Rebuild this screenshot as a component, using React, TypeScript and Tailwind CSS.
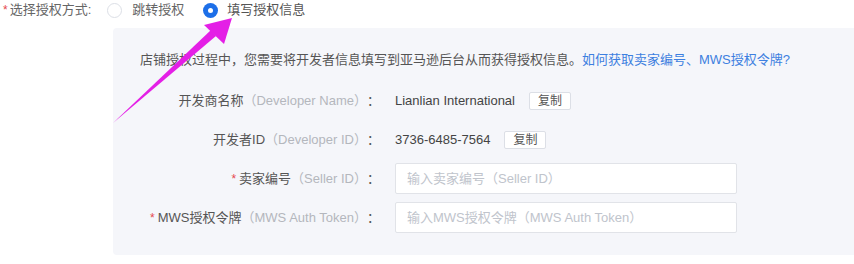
import React from 'react';

const font = { fontFamily: '"Liberation Sans", "Noto Sans CJK SC", Arial, sans-serif' };

const Label: React.FC<{ name: string; en: string; required?: boolean }> = ({ name, en, required }) => (
  <div className="flex items-center justify-end whitespace-nowrap text-[13px]">
    {required && <span className="text-[#e5484d] mr-[3px] text-[12px]">*</span>}
    <span className="text-[#555]">{name}</span>
    <span className="text-[#b4b7bd]">（{en}）</span>
    <span className="text-[#555]">：</span>
  </div>
);

const CopyButton: React.FC = () => (
  <button className="ml-[14px] h-[18px] w-[42px] bg-white border border-[#dcdfe6] rounded-[2px] text-[12px] leading-none text-[#555]">
    复制
  </button>
);

const Arrow: React.FC = () => (
  <svg className="absolute left-0 top-0 pointer-events-none" width="260" height="140" viewBox="0 0 260 140">
    <polygon points="113,123 211,30 216,36" fill="#e41fe6" />
    <polygon points="232,18 204,25 224,44" fill="#e41fe6" />
  </svg>
);

export default function App() {
  return (
    <div className="relative w-[854px] h-[264px] bg-white overflow-hidden" style={font}>
      <div className="flex items-center h-[20px] text-[13px]">
        <span className="ml-[3px] text-[#e5484d] text-[12px]">*</span>
        <span className="ml-[2px] text-[#666]">选择授权方式:</span>
        <label className="flex items-center ml-[16px]">
          <span className="w-[15px] h-[15px] rounded-full border border-[#dcdfe6] bg-white" />
          <span className="ml-[10px] text-[#666]">跳转授权</span>
        </label>
        <label className="flex items-center ml-[19px]">
          <span className="w-[15px] h-[15px] rounded-full bg-[#1d6fe8] flex items-center justify-center">
            <span className="w-[5px] h-[5px] rounded-full bg-white" />
          </span>
          <span className="ml-[9px] text-[#555]">填写授权信息</span>
        </label>
      </div>

      <div className="ml-[113px] mt-[8px] w-[741px] h-[227px] bg-[#f5f6fa] rounded-l-[4px] pt-[22px]">
        <p className="pl-[27px] h-[20px] leading-[20px] text-[13px] text-[#555] whitespace-nowrap">
          店铺授权过程中，您需要将开发者信息填写到亚马逊后台从而获得授权信息。
          <a className="text-[#3d7fe0]">如何获取卖家编号、MWS授权令牌?</a>
        </p>

        <div className="mt-[11px] grid grid-cols-[267px_1fr] gap-x-[15px]">
          <div className="h-[39px] flex items-center justify-end">
            <Label name="开发商名称" en="Developer Name" />
          </div>
          <div className="h-[39px] flex items-center text-[13px] text-[#444]">
            Lianlian International
            <CopyButton />
          </div>

          <div className="h-[39px] flex items-center justify-end">
            <Label name="开发者ID" en="Developer ID" />
          </div>
          <div className="h-[39px] flex items-center text-[13px] text-[#444]">
            3736-6485-7564
            <CopyButton />
          </div>

          <div className="h-[39px] flex items-center justify-end">
            <Label name="卖家编号" en="Seller ID" required />
          </div>
          <div className="h-[39px] flex items-center">
            <input
              className="w-[342px] h-[31px] bg-white border border-[#e1e3e8] rounded-[2px] px-[11px] text-[13px] outline-none placeholder:text-[#c0c4cc]"
              placeholder="输入卖家编号（Seller ID）"
              style={font}
            />
          </div>

          <div className="h-[39px] flex items-center justify-end">
            <Label name="MWS授权令牌" en="MWS Auth Token" required />
          </div>
          <div className="h-[39px] flex items-center">
            <input
              className="w-[342px] h-[31px] bg-white border border-[#e1e3e8] rounded-[2px] px-[11px] text-[13px] outline-none placeholder:text-[#c0c4cc]"
              placeholder="输入MWS授权令牌（MWS Auth Token）"
              style={font}
            />
          </div>
        </div>
      </div>

      <Arrow />
    </div>
  );
}
